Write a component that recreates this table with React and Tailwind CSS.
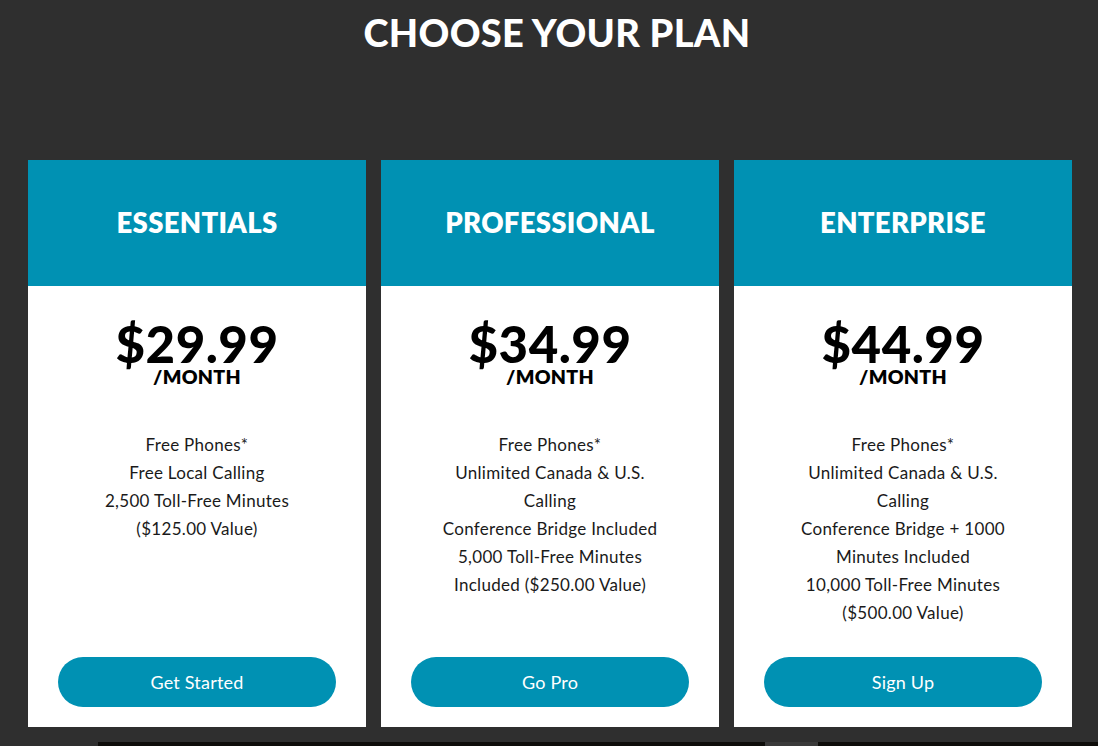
import React from "react";

const plans = [
  {
    name: "ESSENTIALS",
    price: "$29.99",
    lines: ["Free Phones*", "Free Local Calling", "2,500 Toll-Free Minutes", "($125.00 Value)"],
    cta: "Get Started",
  },
  {
    name: "PROFESSIONAL",
    price: "$34.99",
    lines: [
      "Free Phones*",
      "Unlimited Canada & U.S.",
      "Calling",
      "Conference Bridge Included",
      "5,000 Toll-Free Minutes",
      "Included ($250.00 Value)",
    ],
    cta: "Go Pro",
  },
  {
    name: "ENTERPRISE",
    price: "$44.99",
    lines: [
      "Free Phones*",
      "Unlimited Canada & U.S.",
      "Calling",
      "Conference Bridge + 1000",
      "Minutes Included",
      "10,000 Toll-Free Minutes",
      "($500.00 Value)",
    ],
    cta: "Sign Up",
  },
];

function Card({ plan }) {
  return (
    <div className="w-[338px] flex flex-col bg-white">
      <div className="h-[126px] bg-[#0091b3] flex items-center justify-center">
        <h2 className="text-white text-[27.5px] font-extrabold tracking-[0.3px] leading-none">{plan.name}</h2>
      </div>
      <div className="flex-1 flex flex-col items-center">
        <div className="mt-[35px] text-[51px] leading-[46px] font-black text-black tracking-[0.5px]">{plan.price}</div>
        <div className="text-[19.5px] leading-[20px] font-extrabold text-black tracking-[0.3px]">/MONTH</div>
        <div className="mt-[44px] flex flex-col items-center text-[17px] leading-[28px] text-[#1a1a1a] tracking-[0.3px]">
          {plan.lines.map((l, i) => (
            <div key={i}>{l}</div>
          ))}
        </div>
        <div className="flex-1" />
        <button className="mb-[20px] w-[278px] h-[50px] rounded-full bg-[#0091b3] text-white text-[18px] tracking-[0.2px]">
          {plan.cta}
        </button>
      </div>
    </div>
  );
}

export default function App() {
  return (
    <div
      className="w-[1098px] h-[746px] overflow-hidden bg-[#2f2f2f] flex flex-col"
      style={{ fontFamily: "Lato, 'Open Sans', sans-serif" }}
    >
      <h1 className="pt-[9px] pl-[16px] h-[160px] text-center text-white text-[38px] leading-[46px] font-black tracking-[0.3px]">
        CHOOSE YOUR PLAN
      </h1>
      <div className="flex gap-[15px] pl-[28px] h-[567px]">
        {plans.map((p) => (
          <Card key={p.name} plan={p} />
        ))}
      </div>
      <div className="h-[15px]" />
      <div className="flex h-[4px]">
        <div className="w-[98px] bg-[#2f2f2f]" />
        <div className="w-[667px] bg-[#0e0d0a]" />
        <div className="w-[53px] bg-[#3a3a3a]" />
        <div className="flex-1 bg-[#0e0d0a]" />
      </div>
    </div>
  );
}
